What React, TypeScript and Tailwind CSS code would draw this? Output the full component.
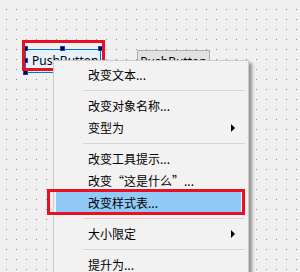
import React from "react";

const font = { fontFamily: '"Noto Sans CJK SC", "Noto Sans", sans-serif' };

function Handle({ x, y }: { x: number; y: number }) {
  return (
    <div
      className="absolute w-[5px] h-[5px] bg-black border border-[#0a3cff]"
      style={{ left: x, top: y }}
    />
  );
}

function Item({ label, arrow }: { label: string; arrow?: boolean }) {
  return (
    <div className="relative flex items-center h-[22px] pl-[34px] text-[12px] text-black">
      <span>{label}</span>
      {arrow && (
        <svg className="absolute left-[177px] top-[7px]" width="5" height="8" viewBox="0 0 5 8">
          <path d="M0 0 L4 4 L0 8 Z" fill="#000" />
        </svg>
      )}
    </div>
  );
}

function Sep() {
  return (
    <div className="h-[9px] flex items-center pl-[29px] pr-[3px]">
      <div className="h-px w-full bg-[#d7d7d7]" />
    </div>
  );
}

export default function App() {
  return (
    <div
      className="relative w-[300px] h-[272px] overflow-hidden bg-[#f0f0f0] font-['Noto_Sans_CJK_SC','Noto_Sans',sans-serif]"
      style={font}
    >
      <svg className="absolute inset-0" width="300" height="272">
        <defs>
          <pattern id="dots" x="0" y="0" width="10" height="10" patternUnits="userSpaceOnUse">
            <rect x="6" y="9" width="1" height="1" fill="#8a8a8a" />
          </pattern>
        </defs>
        <rect width="300" height="272" fill="url(#dots)" />
      </svg>

      {/* first (selected) button */}
      <div className="absolute left-[25px] top-[49px] w-[76px] h-[24px] border border-[#0078d7] bg-[#e5f1fb] flex items-center pl-[6px] text-[12px] text-black font-['Noto_Sans',sans-serif]">
        PushButton
      </div>
      <Handle x={23} y={46} />
      <Handle x={60} y={46} />
      <Handle x={98} y={46} />
      <Handle x={23} y={58} />
      <Handle x={23} y={70} />

      {/* red outline around selected button */}
      <div className="absolute left-[22px] top-[40px] w-[83px] h-[31px] border-[3px] border-[#e81123]" />

      {/* second button */}
      <div className="absolute left-[137px] top-[50px] w-[73px] h-[23px] border border-[#adadad] bg-[#e1e1e1] flex items-center justify-center text-[12px] text-black font-['Noto_Sans',sans-serif]">
        PushButton
      </div>

      {/* context menu */}
      <div className="absolute left-[53px] top-[60px] w-[196px] h-[230px] bg-[#f2f2f2] border border-[#cccccc] shadow-[3px_3px_3px_rgba(0,0,0,0.4)] pt-[3px]">
        <Item label="改变文本..." />
        <Sep />
        <Item label="改变对象名称..." />
        <Item label="变型为" arrow />
        <Sep />
        <Item label="改变工具提示..." />
        <Item label="改变“这是什么”..." />
        <div className="relative h-[22px] mx-[2px] bg-[#91c9f7] flex items-center pl-[32px] pr-[5px] text-[12px] text-black mr-[7px]">
          <span>改变样式表...</span>
        </div>
        <Sep />
        <Item label="大小限定" arrow />
        <Sep />
        <Item label="提升为..." />
      </div>

      {/* red outline around highlighted item */}
      <div className="absolute left-[47px] top-[189px] w-[198px] h-[26px] border-[3px] border-[#e81123]" />
    </div>
  );
}
